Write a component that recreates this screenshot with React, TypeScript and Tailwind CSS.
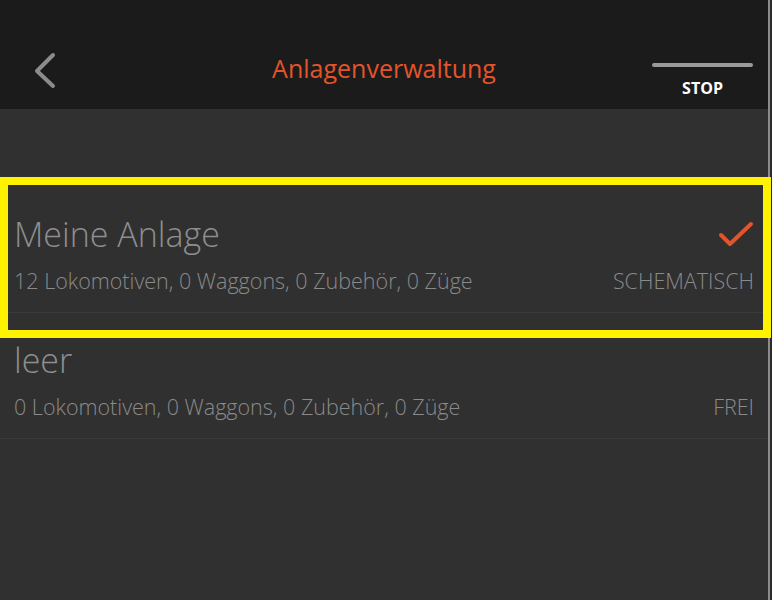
const layouts = [
  {
    name: "Meine Anlage",
    stats: "12 Lokomotiven, 0 Waggons, 0 Zubehör, 0 Züge",
    mode: "SCHEMATISCH",
    active: true,
  },
  {
    name: "leer",
    stats: "0 Lokomotiven, 0 Waggons, 0 Zubehör, 0 Züge",
    mode: "FREI",
    active: false,
  },
];

function Check() {
  return (
    <svg width="36" height="28" viewBox="0 0 36 28" fill="none">
      <path
        d="M3 15l9 9L33 4"
        stroke="#e4542a"
        strokeWidth="4"
        strokeLinecap="round"
        strokeLinejoin="round"
      />
    </svg>
  );
}

function Back() {
  return (
    <svg width="24" height="40" viewBox="0 0 24 40" fill="none">
      <path
        d="M20 4L4 20l16 15"
        stroke="#8c8c8c"
        strokeWidth="4"
        strokeLinecap="round"
        strokeLinejoin="round"
      />
    </svg>
  );
}

export default function App() {
  return (
    <div
      className="relative flex h-[600px] w-[772px] overflow-hidden bg-[#303030]"
      style={{ fontFamily: "'Open Sans', 'Liberation Sans', sans-serif" }}
    >
      <div className="flex w-[768px] flex-col">
        {/* Header */}
        <header className="flex h-[109px] shrink-0 items-end bg-[#1b1b1b] pb-[13px]">
          <div className="flex w-full items-center">
            <div className="-mt-[6px] w-[116px] pl-[33px]">
              <button className="flex items-center">
                <Back />
              </button>
            </div>
            <h1 className="-mt-[10px] flex-1 text-center text-[25px] font-normal text-[#e4542a]">
              Anlagenverwaltung
            </h1>
            <div className="mr-[15px] flex w-[101px] flex-col items-center pt-[12px]">
              <div className="h-[4px] w-full rounded-full bg-[#9a9a9a]" />
              <span className="mt-[13px] text-[16px] font-bold leading-none text-white">
                STOP
              </span>
            </div>
          </div>
        </header>

        {/* List */}
        <div className="mt-[78px] flex flex-col">
          {layouts.map((l) => (
            <div
              key={l.name}
              className="flex flex-col border-b border-[#393939] pl-[14px] pr-[14px] pt-[27px] pb-[18px]"
            >
              <div className="flex h-[40px] items-center justify-between">
                <span className="text-[34px] font-light leading-[40px] text-[#8e8e8e]">
                  {l.name}
                </span>
                {l.active && <Check />}
              </div>
              <div className="mt-[14px] flex items-center justify-between text-[21.5px] font-light leading-[26px] text-[#8a8a8a]">
                <span>{l.stats}</span>
                <span>{l.mode}</span>
              </div>
            </div>
          ))}
        </div>
      </div>

      {/* Right edge */}
      <div className="w-[2px] bg-[#8c8c8c]" />
      <div className="w-[2px] bg-[#2a2a2a]" />

      {/* Highlight overlay */}
      <div className="pointer-events-none absolute left-0 top-[177px] h-[161px] w-[771px] border-[8px] border-[#fff200]" />
    </div>
  );
}
